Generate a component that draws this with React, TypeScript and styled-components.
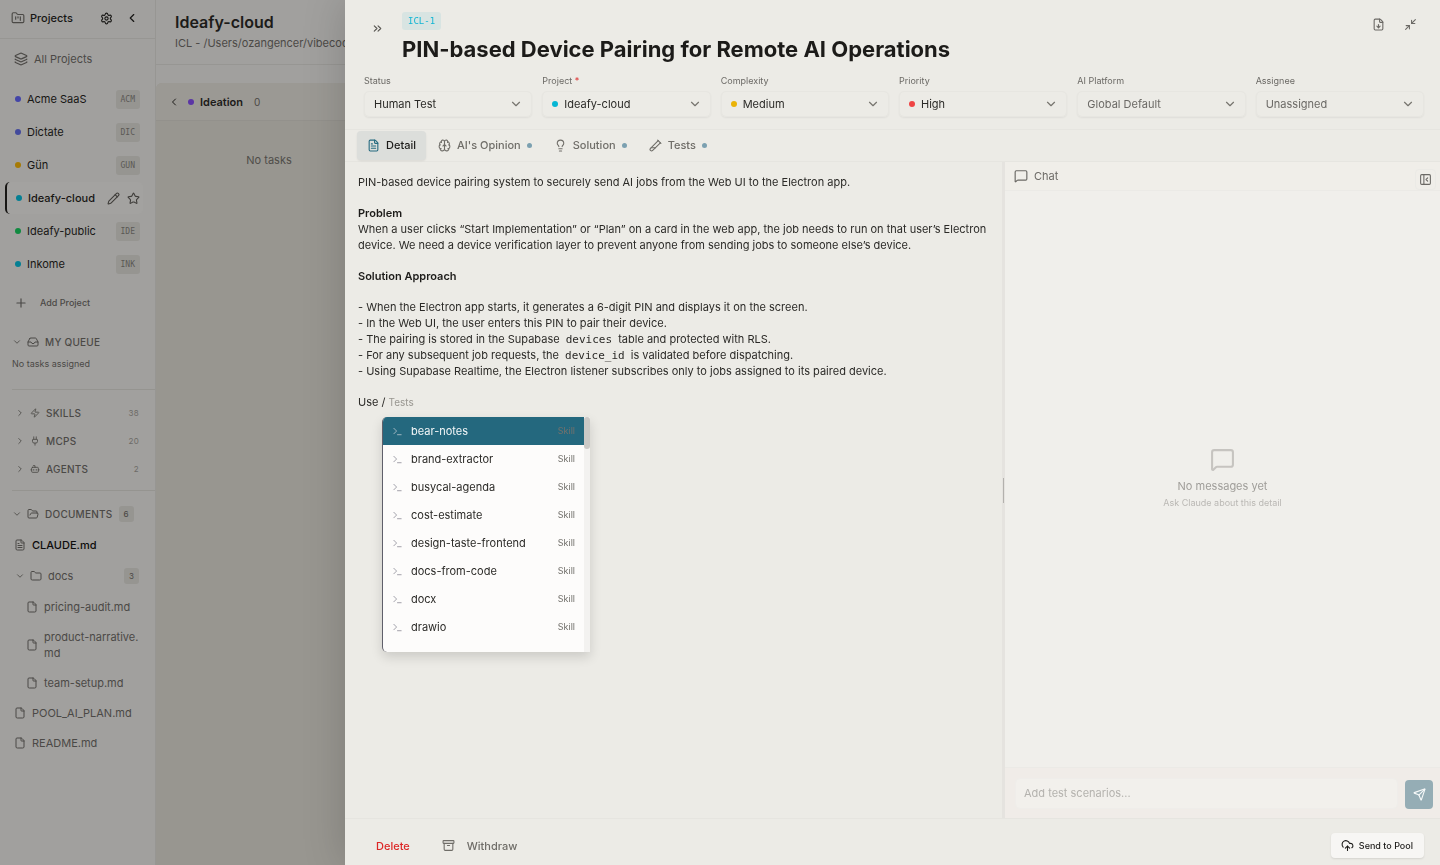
import React from "react";
import styled, { createGlobalStyle, css } from "styled-components";
import {
  Archive, Bot, Brain, ChevronDown, ChevronLeft, ChevronRight, ChevronsRight, CloudUpload, File,
  FileDown, FileText, Folder, FolderKanban, FolderOpen, Inbox, Layers, Lightbulb, MessageSquare,
  Minimize2, PanelLeftClose, Pencil, Plug, Plus, Send, Settings, Star, Terminal, TestTubeDiagonal, Zap,
} from "lucide-react";

const GlobalStyle = createGlobalStyle`
  * { box-sizing: border-box; }
  body {
    margin: 0;
    background: #a1a09e;
    color: #1c1b19;
    font: 11px/16px Inter, "Liberation Sans", sans-serif;
  }
  button, input, select { font: inherit; color: inherit; margin: 0; }
  button { border: 0; padding: 0; background: none; cursor: pointer; text-align: left; }
  a { color: inherit; text-decoration: none; }
  h1, h2, h3, p, ul { margin: 0; padding: 0; }
  ul { list-style: none; }
  svg { flex: none; display: block; }
`;

const mono = css`font-family: "DejaVu Sans Mono", "Liberation Mono", monospace;`;

const Page = styled.div`
  display: flex;
  min-height: 100vh;
`;

/* ---------- sidebar ---------- */
const Sidebar = styled.aside`
  width: 156px;
  flex: none;
  border-right: 1px solid #979693;
  background: #a1a09e;
  color: #4b4946;
`;
const SidebarHeader = styled.header`
  display: flex;
  align-items: center;
  height: 39px;
  padding: 0 16px 2px 11px;
  border-bottom: 1px solid #979693;
`;
const SidebarTitle = styled.h2`
  flex: 1;
  margin-left: 5px;
  font-size: 11px;
  font-weight: 500;
  color: #171614;
`;
const IconButton = styled.button<{ $dark?: boolean }>`
  display: grid;
  place-items: center;
  color: ${(p) => (p.$dark ? "#171614" : "inherit")};
  & + & { margin-left: 12px; }
`;
const AllProjects = styled.a`
  display: flex;
  align-items: center;
  gap: 6px;
  height: 32px;
  margin: 4px 0 8px;
  padding-left: 14px;
`;
const ProjectRow = styled.a<{ $active?: boolean }>`
  display: flex;
  align-items: center;
  height: 32px;
  margin: 0 12px 1px 5px;
  padding: 0 3px 0 ${(p) => (p.$active ? 9 : 10)}px;
  border-left: ${(p) => (p.$active ? "2px solid #171614" : "0")};
  border-radius: 5px;
  background: ${(p) => (p.$active ? "#a3a2a0" : "none")};
  color: #171614;
  font-weight: ${(p) => (p.$active ? 500 : 400)};
`;
const Dot = styled.span<{ $color: string; $size?: number }>`
  flex: none;
  width: ${(p) => p.$size ?? 6}px;
  height: ${(p) => p.$size ?? 6}px;
  border-radius: 50%;
  background: ${(p) => p.$color};
`;
const ProjectName = styled.span`
  flex: 1;
  margin-left: 6px;
  white-space: nowrap;
`;
const Tag = styled.span`
  ${mono}
  padding: 0 5px;
  border-radius: 3px;
  background: #969591;
  color: #5b5955;
  font-size: 8px;
  line-height: 19px;
`;
const RowActions = styled.span`
  display: flex;
  gap: 7px;
  color: #3f3d3a;
`;
const AddProject = styled.button`
  display: flex;
  align-items: center;
  gap: 12px;
  height: 30px;
  margin: 8px 0 10px;
  padding-left: 14px;
  font-size: 9px;
  font-weight: 500;
`;
const Section = styled.section`
  margin-left: 12px;
  & + & { border-top: 1px solid #959490; }
`;
const SectionToggle = styled.button<{ $inset?: boolean }>`
  display: flex;
  align-items: center;
  width: 100%;
  height: 28px;
  padding: 0 16px 0 ${(p) => (p.$inset ? 3 : 0)}px;
  font-size: 10px;
  font-weight: 500;
  letter-spacing: 0.025em;
`;
const SectionLabel = styled.span<{ $grow?: boolean }>`
  flex: ${(p) => (p.$grow ? 1 : "none")};
  margin: 0 6px;
`;
const Count = styled.span`
  font-size: 8px;
  font-weight: 400;
  color: #6d6b67;
`;
const CountBadge = styled.span`
  padding: 0 5px;
  border-radius: 3px;
  background: #969591;
  font-size: 8px;
  line-height: 16px;
  letter-spacing: 0;
`;
const QueueSection = styled(Section)` padding-bottom: 17px; `;
const QueueEmpty = styled.p`
  font-size: 9px;
`;
const ToolSection = styled(Section)` padding: 9px 0 7px; `;
const DocSection = styled(Section)` padding-top: 9px; `;
const DocRow = styled.a<{ $depth?: number; $active?: boolean }>`
  display: flex;
  align-items: center;
  gap: 6px;
  margin-top: ${(p) => (p.$active ? 2 : 0)}px;
  padding: 7px 12px 7px ${(p) => (p.$depth ? 14 : 2)}px;
  line-height: 16px;
  color: ${(p) => (p.$active ? "#0d0c0b" : "inherit")};
  font-weight: ${(p) => (p.$active ? 500 : 400)};
  span { flex: 1; min-width: 0; word-break: break-all; }
  svg { color: #4b4946; }
`;
const FolderRow = styled.button`
  display: flex;
  align-items: center;
  width: 100%;
  height: 32px;
  padding: 0 16px 0 3px;
`;
const FolderName = styled.span`
  flex: 1;
  margin-left: 6px;
`;
const FolderGlyph = styled(Folder)` margin-left: 5px; `;
const ToggleIcon = styled.span` margin-left: 5px; `;

/* ---------- board behind the drawer ---------- */
const Board = styled.main`
  flex: 1;
  min-width: 0;
  display: flex;
  flex-direction: column;
`;
const BoardHeader = styled.header`
  height: 65px;
  padding: 10px 19px;
  border-bottom: 1px solid #979693;
  white-space: nowrap;
`;
const BoardTitle = styled.h2`
  font-size: 16px;
  line-height: 24px;
  font-weight: 600;
`;
const BoardPath = styled.p`
  margin-top: 1px;
  color: #4b4946;
`;
const Lane = styled.section`
  flex: 1;
  width: 226px;
  margin-top: 18px;
  border-radius: 6px 0 0 0;
  background: #989690;
`;
const LaneHeader = styled.header`
  display: flex;
  align-items: center;
  height: 38px;
  padding-left: 12px;
  border-bottom: 1px solid #93918c;
  border-radius: 6px 0 0 0;
  background: #9b9994;
`;
const LaneName = styled.h3`
  margin: 0 11px 0 6px;
  font-size: 11px;
  font-weight: 600;
`;
const LaneDot = styled(Dot)` margin-left: 8px; `;
const LaneCount = styled.span`
  font-size: 10px;
  color: #4b4946;
`;
const LaneEmpty = styled.p`
  padding-top: 31px;
  text-align: center;
  color: #4f4d49;
`;

/* ---------- drawer ---------- */
const Drawer = styled.section`
  position: fixed;
  inset: 0 0 0 345px;
  display: flex;
  flex-direction: column;
  background: #ecebe6;
  box-shadow: 0 0 40px rgba(0, 0, 0, 0.18);
`;
const DrawerHeader = styled.header`
  height: 130px;
  flex: none;
  padding: 12px 16px 0 19px;
  border-bottom: 1px solid #e6e5e0;
  color: #6b6965;
`;
const HeadingRow = styled.div`
  display: flex;
  align-items: flex-start;
  gap: 15px;
`;
const HeadingText = styled.div` flex: 1; `;
const CollapseButton = styled(IconButton)`
  width: 20px;
  height: 32px;
  margin: 0 0 0 3px;
  color: #55534f;
`;
const HeaderActions = styled.div`
  display: flex;
  gap: 7px;
  padding: 6px 7px;
`;
const CardId = styled.span`
  ${mono}
  display: inline-block;
  padding: 0 6px;
  border-radius: 3px;
  background: #d8e4e2;
  color: #12b5d3;
  font-size: 9px;
  line-height: 18px;
  vertical-align: top;
`;
const CardTitle = styled.h1`
  margin-top: 5px;
  font-size: 22px;
  line-height: 28px;
  font-weight: 700;
  color: #1c1b19;
`;
const Fields = styled.div`
  display: grid;
  grid-template-columns: repeat(6, 1fr);
  gap: 10px;
  margin-top: 10px;
`;
const Field = styled.label`
  display: block;
  font-size: 9px;
  line-height: 16px;
`;
const Required = styled.span` color: #dc2626; `;
const SelectBox = styled.span<{ $muted?: boolean }>`
  display: flex;
  align-items: center;
  gap: 6px;
  height: 26px;
  margin-top: 2px;
  padding: 0 8px 0 9px;
  border: 1px solid #e7e6e1;
  border-radius: 5px;
  box-shadow: 0 1px 2px rgba(0, 0, 0, 0.06);
  font-size: 11px;
  color: ${(p) => (p.$muted ? "#6b6965" : "#2b2a27")};
  svg { color: #77756f; }
`;
const Select = styled.select`
  flex: 1;
  min-width: 0;
  appearance: none;
  border: 0;
  padding: 0;
  background: none;
  outline: none;
`;

const Tabs = styled.nav`
  display: flex;
  gap: 2px;
  flex: none;
  height: 32px;
  padding: 1px 12px;
  border-bottom: 1px solid #e6e5e0;
`;
const Tab = styled.button<{ $active?: boolean }>`
  display: flex;
  align-items: center;
  gap: 6px;
  height: 29px;
  padding: 0 10px 1px;
  border-radius: 4px;
  font-weight: 500;
  color: ${(p) => (p.$active ? "#1c1b19" : "#6f6d68")};
  background: ${(p) => (p.$active ? "#dcdedb" : "none")};
  box-shadow: ${(p) => (p.$active ? "0 1px 2px rgba(0, 0, 0, 0.08)" : "none")};
  svg { color: ${(p) => (p.$active ? "#256a80" : "inherit")}; }
`;

const Body = styled.div`
  flex: 1;
  min-height: 0;
  display: flex;
`;
const Editor = styled.article`
  flex: 0 0 60%;
  min-width: 0;
  padding: 12px 13px;
  line-height: 16px;
  color: #2b2a27;
  strong { display: block; font-weight: 600; color: #1c1b19; }
  & > * + * { margin-top: 15px; }
`;
const Code = styled.code`
  ${mono}
  padding: 0 3px;
  font-size: 11px;
  line-height: 15px;
`;
const PromptLine = styled.div`
  position: relative;
  span { color: #989690; font-size: 10px; }
`;
const Menu = styled.div`
  position: absolute;
  top: 23px;
  left: 24px;
  display: flex;
  width: 208px;
  height: 235px;
  overflow: hidden;
  border-left: 1px solid #5f5f6a;
  border-radius: 5px 0 0 5px;
  background: #fdfcfb;
  box-shadow: 0 5px 12px rgba(0, 0, 0, 0.14);
`;
const MenuList = styled.ul` flex: 1; `;
const MenuItem = styled.button<{ $active?: boolean }>`
  display: flex;
  align-items: center;
  gap: 8px;
  width: 100%;
  height: 28px;
  padding: 0 9px;
  background: ${(p) => (p.$active ? "#24687e" : "none")};
  color: ${(p) => (p.$active ? "#f4f7f8" : "#2b2a27")};
  svg { color: ${(p) => (p.$active ? "#a9bcc5" : "#9a99a3")}; }
`;
const MenuName = styled.b`
  flex: 1;
  font-weight: 400;
`;
const MenuKind = styled.small`
  font-size: 9px;
  color: #73716c;
`;
const ScrollTrack = styled.div`
  width: 6px;
  background: #f3f2f0;
`;
const ScrollThumb = styled.div`
  height: 32px;
  border-radius: 3px;
  background: #cbc9c6;
`;

const Splitter = styled.div`
  display: grid;
  place-items: center;
  width: 3px;
  flex: none;
  background: #e5e3df;
  &::after { content: ""; width: 1px; height: 25px; background: #b3b1ad; }
`;
const Chat = styled.aside`
  flex: 1;
  min-width: 0;
  display: flex;
  flex-direction: column;
  background: #f0efeb;
  color: #6b6965;
`;
const ChatHeader = styled.header`
  display: flex;
  align-items: center;
  gap: 6px;
  height: 29px;
  flex: none;
  padding: 0 4px 0 9px;
  border-bottom: 1px solid #ebeae6;
  background: #f0eee9;
`;
const ChatTitle = styled.h2`
  flex: 1;
  font-size: 11px;
  font-weight: 400;
`;
const PanelToggle = styled(IconButton)`
  align-self: flex-end;
  width: 21px;
  height: 21px;
  border: 1px solid #ebeae6;
  border-radius: 4px;
`;
const ChatEmpty = styled.div`
  flex: 1;
  display: flex;
  flex-direction: column;
  align-items: center;
  justify-content: center;
  color: #9f9d99;
  svg { color: #c6c4c0; margin-bottom: 6px; }
`;
const ChatHint = styled.p`
  margin-top: 1px;
  font-size: 9px;
  color: #bab8b4;
`;
const Composer = styled.form`
  display: flex;
  align-items: flex-end;
  gap: 7px;
  padding: 10px 7px 9px 10px;
  border-top: 1px solid #ebeae6;
  background: #f0ece8;
`;
const Message = styled.input`
  flex: 1;
  min-width: 0;
  height: 31px;
  padding: 0 8px 2px;
  border: 1px solid #efedea;
  border-radius: 5px;
  background: #f2f0ec;
  outline: none;
  &::placeholder { color: #b4b2ae; opacity: 1; }
`;
const SendButton = styled.button`
  display: grid;
  place-items: center;
  width: 28px;
  height: 29px;
  border-radius: 4px;
  background: #95adb5;
  color: #f7f9f9;
`;

const Footer = styled.footer`
  display: flex;
  align-items: center;
  flex: none;
  height: 47px;
  padding: 7px 16px 0 31px;
  border-top: 1px solid #e6e5e0;
  font-weight: 500;
`;
const DeleteButton = styled.button` color: #dc2626; `;
const WithdrawButton = styled.button`
  display: flex;
  align-items: center;
  gap: 12px;
  margin-left: 32px;
  color: #6f6d68;
`;
const PoolButton = styled.button`
  display: flex;
  align-items: center;
  gap: 5px;
  height: 25px;
  margin-left: auto;
  padding: 0 11px 0 10px;
  border-radius: 4px;
  background: #f7f6f4;
  box-shadow: 0 1px 2px rgba(0, 0, 0, 0.1);
  font-size: 9px;
`;

const projects = [
  { name: "Acme SaaS", tag: "ACM", color: "#4345a8" },
  { name: "Dictate", tag: "DIC", color: "#434a9c" },
  { name: "Gün", tag: "GUN", color: "#a67a05" },
  { name: "Ideafy-cloud", color: "#047f93", active: true },
  { name: "Ideafy-public", tag: "IDE", color: "#108a40" },
  { name: "Inkome", tag: "INK", color: "#047f93" },
];
const tools = [
  { name: "SKILLS", count: 38, Icon: Zap },
  { name: "MCPS", count: 20, Icon: Plug },
  { name: "AGENTS", count: 2, Icon: Bot },
];
const fields = [
  { label: "Status", value: "Human Test" },
  { label: "Project", value: "Ideafy-cloud", color: "#06b6d4", required: true },
  { label: "Complexity", value: "Medium", color: "#eab308" },
  { label: "Priority", value: "High", color: "#ef4444" },
  { label: "AI Platform", value: "Global Default", muted: true },
  { label: "Assignee", value: "Unassigned", muted: true },
];
const tabs = [
  { name: "Detail", Icon: FileText, active: true },
  { name: "AI's Opinion", Icon: Brain },
  { name: "Solution", Icon: Lightbulb },
  { name: "Tests", Icon: TestTubeDiagonal },
];
const skills = [
  "bear-notes", "brand-extractor", "busycal-agenda", "cost-estimate",
  "design-taste-frontend", "docs-from-code", "docx", "drawio",
];

function ProjectSidebar() {
  return (
    <Sidebar>
      <SidebarHeader>
        <FolderKanban size={14} />
        <SidebarTitle>Projects</SidebarTitle>
        <IconButton $dark aria-label="Settings"><Settings size={13} /></IconButton>
        <IconButton $dark aria-label="Collapse sidebar"><ChevronLeft size={14} /></IconButton>
      </SidebarHeader>
      <AllProjects href="#all"><Layers size={14} />All Projects</AllProjects>
      <nav>
        {projects.map((p) => (
          <ProjectRow key={p.name} href={`#${p.name}`} $active={p.active}>
            <Dot $color={p.color} />
            <ProjectName>{p.name}</ProjectName>
            {p.tag ? <Tag>{p.tag}</Tag> : (
              <RowActions><Pencil size={13} /><Star size={13} /></RowActions>
            )}
          </ProjectRow>
        ))}
      </nav>
      <AddProject><Plus size={14} />Add Project</AddProject>
      <QueueSection>
        <SectionToggle>
          <ChevronDown size={10} />
          <ToggleIcon><Inbox size={12} /></ToggleIcon>
          <SectionLabel>MY QUEUE</SectionLabel>
        </SectionToggle>
        <QueueEmpty>No tasks assigned</QueueEmpty>
      </QueueSection>
      <ToolSection>
        {tools.map(({ name, count, Icon }) => (
          <SectionToggle key={name} $inset>
            <ChevronRight size={10} />
            <ToggleIcon><Icon size={10} /></ToggleIcon>
            <SectionLabel $grow>{name}</SectionLabel>
            <Count>{count}</Count>
          </SectionToggle>
        ))}
      </ToolSection>
      <DocSection>
        <SectionToggle>
          <ChevronDown size={10} />
          <ToggleIcon><FolderOpen size={12} /></ToggleIcon>
          <SectionLabel>DOCUMENTS</SectionLabel>
          <CountBadge>6</CountBadge>
        </SectionToggle>
        <DocRow href="#claude" $active><FileText size={12} /><span>CLAUDE.md</span></DocRow>
        <FolderRow>
          <ChevronDown size={10} />
          <FolderGlyph size={12} />
          <FolderName>docs</FolderName>
          <CountBadge>3</CountBadge>
        </FolderRow>
        {["pricing-audit.md", "product-narrative.md", "team-setup.md"].map((d) => (
          <DocRow key={d} href={`#${d}`} $depth={1}><File size={12} /><span>{d}</span></DocRow>
        ))}
        {["POOL_AI_PLAN.md", "README.md"].map((d) => (
          <DocRow key={d} href={`#${d}`}><File size={12} /><span>{d}</span></DocRow>
        ))}
      </DocSection>
    </Sidebar>
  );
}

function CardDrawer() {
  return (
    <Drawer role="dialog" aria-labelledby="card-title">
      <DrawerHeader>
        <HeadingRow>
          <CollapseButton aria-label="Close"><ChevronsRight size={13} /></CollapseButton>
          <HeadingText>
            <CardId>ICL-1</CardId>
            <CardTitle id="card-title">PIN-based Device Pairing for Remote AI Operations</CardTitle>
          </HeadingText>
          <HeaderActions>
            <IconButton aria-label="Export"><FileDown size={13} /></IconButton>
            <IconButton aria-label="Minimize"><Minimize2 size={13} /></IconButton>
          </HeaderActions>
        </HeadingRow>
        <Fields>
          {fields.map((f) => (
            <Field key={f.label}>
              {f.label}{f.required && <Required> *</Required>}
              <SelectBox $muted={f.muted}>
                {f.color && <Dot $color={f.color} />}
                <Select defaultValue={f.value}><option>{f.value}</option></Select>
                <ChevronDown size={14} strokeWidth={2} />
              </SelectBox>
            </Field>
          ))}
        </Fields>
      </DrawerHeader>
      <Tabs>
        {tabs.map(({ name, Icon, active }) => (
          <Tab key={name} $active={active}>
            <Icon size={13} />{name}
            {!active && <Dot $color="#7ba0b0" $size={5} />}
          </Tab>
        ))}
      </Tabs>
      <Body>
        <Editor>
          <p>PIN-based device pairing system to securely send AI jobs from the Web UI to the Electron app.</p>
          <p>
            <strong>Problem</strong>
            When a user clicks “Start Implementation” or “Plan” on a card in the web app, the job needs to run on that user’s Electron device. We need a device verification layer to prevent anyone from sending jobs to someone else’s device.
          </p>
          <p><strong>Solution Approach</strong></p>
          <ul>
            <li>- When the Electron app starts, it generates a 6-digit PIN and displays it on the screen.</li>
            <li>- In the Web UI, the user enters this PIN to pair their device.</li>
            <li>- The pairing is stored in the Supabase <Code>devices</Code> table and protected with RLS.</li>
            <li>- For any subsequent job requests, the <Code>device_id</Code> is validated before dispatching.</li>
            <li>- Using Supabase Realtime, the Electron listener subscribes only to jobs assigned to its paired device.</li>
          </ul>
          <PromptLine>
            Use / <span>Tests</span>
            <Menu>
              <MenuList>
                {skills.map((s, i) => (
                  <li key={s}>
                    <MenuItem $active={i === 0}>
                      <Terminal size={11} strokeWidth={2} />
                      <MenuName>{s}</MenuName>
                      <MenuKind>Skill</MenuKind>
                    </MenuItem>
                  </li>
                ))}
              </MenuList>
              <ScrollTrack><ScrollThumb /></ScrollTrack>
            </Menu>
          </PromptLine>
        </Editor>
        <Splitter />
        <Chat>
          <ChatHeader>
            <MessageSquare size={14} />
            <ChatTitle>Chat</ChatTitle>
            <PanelToggle aria-label="Collapse chat"><PanelLeftClose size={13} /></PanelToggle>
          </ChatHeader>
          <ChatEmpty>
            <MessageSquare size={25} />
            <p>No messages yet</p>
            <ChatHint>Ask Claude about this detail</ChatHint>
          </ChatEmpty>
          <Composer>
            <Message aria-label="Message" placeholder="Add test scenarios..." />
            <SendButton type="button" aria-label="Send"><Send size={13} /></SendButton>
          </Composer>
        </Chat>
      </Body>
      <Footer>
        <DeleteButton>Delete</DeleteButton>
        <WithdrawButton><Archive size={13} />Withdraw</WithdrawButton>
        <PoolButton><CloudUpload size={13} />Send to Pool</PoolButton>
      </Footer>
    </Drawer>
  );
}

export default function App() {
  return (
    <>
      <GlobalStyle />
      <Page>
        <ProjectSidebar />
        <Board>
          <BoardHeader>
            <BoardTitle>Ideafy-cloud</BoardTitle>
            <BoardPath>ICL - /Users/ozangencer/vibecode</BoardPath>
          </BoardHeader>
          <Lane>
            <LaneHeader>
              <ChevronLeft size={12} />
              <LaneDot $color="#5b35a5" />
              <LaneName>Ideation</LaneName>
              <LaneCount>0</LaneCount>
            </LaneHeader>
            <LaneEmpty>No tasks</LaneEmpty>
          </Lane>
        </Board>
      </Page>
      <CardDrawer />
    </>
  );
}
